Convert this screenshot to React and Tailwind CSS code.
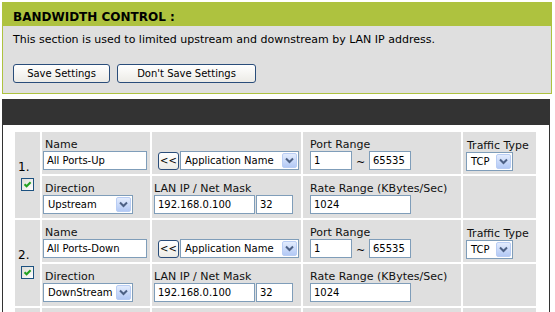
import React from "react";

function Arrow() {
  return (
    <span className="ml-auto mr-[1px] flex h-[15px] w-[15px] items-center justify-center rounded-[2px] border border-[#b9cdf4] bg-gradient-to-b from-[#e3ecfd] to-[#b3c9f5]">
      <svg width="9" height="7" viewBox="0 0 9 7">
        <path d="M1 1.5 L4.5 5 L8 1.5" fill="none" stroke="#4d6185" strokeWidth="2" />
      </svg>
    </span>
  );
}

function Select({ text, className }) {
  return (
    <div className={`flex h-[19px] items-center border border-[#7f9db9] bg-white text-[10px] leading-[17px] ${className}`}>
      <span className="pl-[4px]">{text}</span>
      <Arrow />
    </div>
  );
}

function Input({ value, className }) {
  return (
    <div className={`h-[19px] border border-[#7f9db9] bg-white pl-[3px] text-[10px] leading-[17px] ${className}`}>
      {value}
    </div>
  );
}

function Label({ children, className = "" }) {
  return <div className={`text-[11px] leading-[13px] text-[#111111] ${className}`}>{children}</div>;
}

function Check() {
  return (
    <span className="flex h-[13px] w-[13px] items-center justify-center border border-[#1c5180] bg-gradient-to-br from-[#dcdcd7] to-white">
      <svg width="9" height="9" viewBox="0 0 9 9">
        <path d="M1.5 4.2 L3.6 6.3 L7.6 2.2" fill="none" stroke="#21a121" strokeWidth="2" />
      </svg>
    </span>
  );
}

function Rule({ n, name, dir }) {
  return (
    <>
      <div className="row-span-2 flex flex-col justify-center bg-[#dfdfdf]">
        <div className="pl-[3px] text-[12px] leading-[14px]">{n}.</div>
        <div className="ml-[6px] mt-[4px]">
          <Check />
        </div>
      </div>
      <div className="bg-[#dfdfdf] pl-[1px] pt-[6px]">
        <Label className="pl-[2px]">Name</Label>
        <Input value={name} className="w-[104px]" />
      </div>
      <div className="bg-[#dfdfdf] pl-[6px] pt-[6px]">
        <Label>&nbsp;</Label>
        <div className="flex h-[19px] items-center gap-[1px]">
          <div className="flex h-[18px] w-[21px] items-center justify-center rounded-[3px] border border-[#2a4d7a] bg-gradient-to-b from-white to-[#ecebe6] text-[10px]">
            &lt;&lt;
          </div>
          <Select text="Application Name" className="w-[119px]" />
        </div>
      </div>
      <div className="bg-[#dfdfdf] pl-[7px] pt-[6px]">
        <Label>Port Range</Label>
        <div className="flex">
          <Input value="1" className="w-[42px]" />
          <span className="w-[17px] pt-[5px] text-center text-[11px] leading-[14px]">~</span>
          <Input value="65535" className="w-[42px]" />
        </div>
      </div>
      <div className="bg-[#dfdfdf] pl-[3px] pt-[7px]">
        <Label className="pl-[1px]">Traffic Type</Label>
        <Select text="TCP" className="h-[17px] w-[47px]" />
      </div>

      <div className="bg-[#dfdfdf] pl-[1px] pt-[6px]">
        <Label className="pl-[2px]">Direction</Label>
        <Select text={dir} className="w-[90px]" />
      </div>
      <div className="bg-[#dfdfdf] pl-[2px] pt-[6px]">
        <Label>LAN IP / Net Mask</Label>
        <div className="flex gap-[1px]">
          <Input value="192.168.0.100" className="w-[101px]" />
          <Input value="32" className="w-[37px]" />
        </div>
      </div>
      <div className="bg-[#dfdfdf] pl-[7px] pt-[6px]">
        <Label>Rate Range (KBytes/Sec)</Label>
        <Input value="1024" className="w-[101px]" />
      </div>
      <div className="bg-[#dfdfdf]" />
    </>
  );
}

export default function App() {
  return (
    <div className="h-[312px] w-[555px] overflow-hidden bg-white font-['DejaVu_Sans',sans-serif] text-black">
      <div className="ml-[2px] mt-[2px] w-[550px] border border-[#aec23f]">
        <div className="h-[23px] bg-[#aec23f] pl-[10px] pt-[7px] text-[12px] font-bold leading-[14px]">
          BANDWIDTH CONTROL :
        </div>
        <div className="h-[67px] bg-[#dfdfdf] pl-[10px] pt-[7px]">
          <p className="text-[11px] leading-[13px]">
            This section is used to limited upstream and downstream by LAN IP address.
          </p>
          <div className="mt-[18px] flex gap-[7px]">
            <button className="h-[19px] w-[97px] rounded-[3px] border border-[#2a4d7a] bg-gradient-to-b from-white to-[#ecebe6] text-[10px]">
              Save Settings
            </button>
            <button className="h-[19px] w-[139px] rounded-[3px] border border-[#2a4d7a] bg-gradient-to-b from-white to-[#ecebe6] text-[10px]">
              Don't Save Settings
            </button>
          </div>
        </div>
      </div>

      <div className="ml-[2px] mt-[5px] w-[548px]">
        <div className="h-[26px] bg-[#333333]" />
        <div className="h-[200px] border-x border-[#333333] pl-[12px] pt-[7px]">
          <div className="grid grid-cols-[25px_108px_149px_158px_73px] grid-rows-[42px_42px_42px_42px_42px] gap-[2px]">
            <Rule n={1} name="All Ports-Up" dir="Upstream" />
            <Rule n={2} name="All Ports-Down" dir="DownStream" />
            <div className="bg-[#dfdfdf]" />
            <div className="bg-[#dfdfdf]" />
            <div className="bg-[#dfdfdf]" />
            <div className="bg-[#dfdfdf]" />
            <div className="bg-[#dfdfdf]" />
          </div>
        </div>
      </div>
    </div>
  );
}
